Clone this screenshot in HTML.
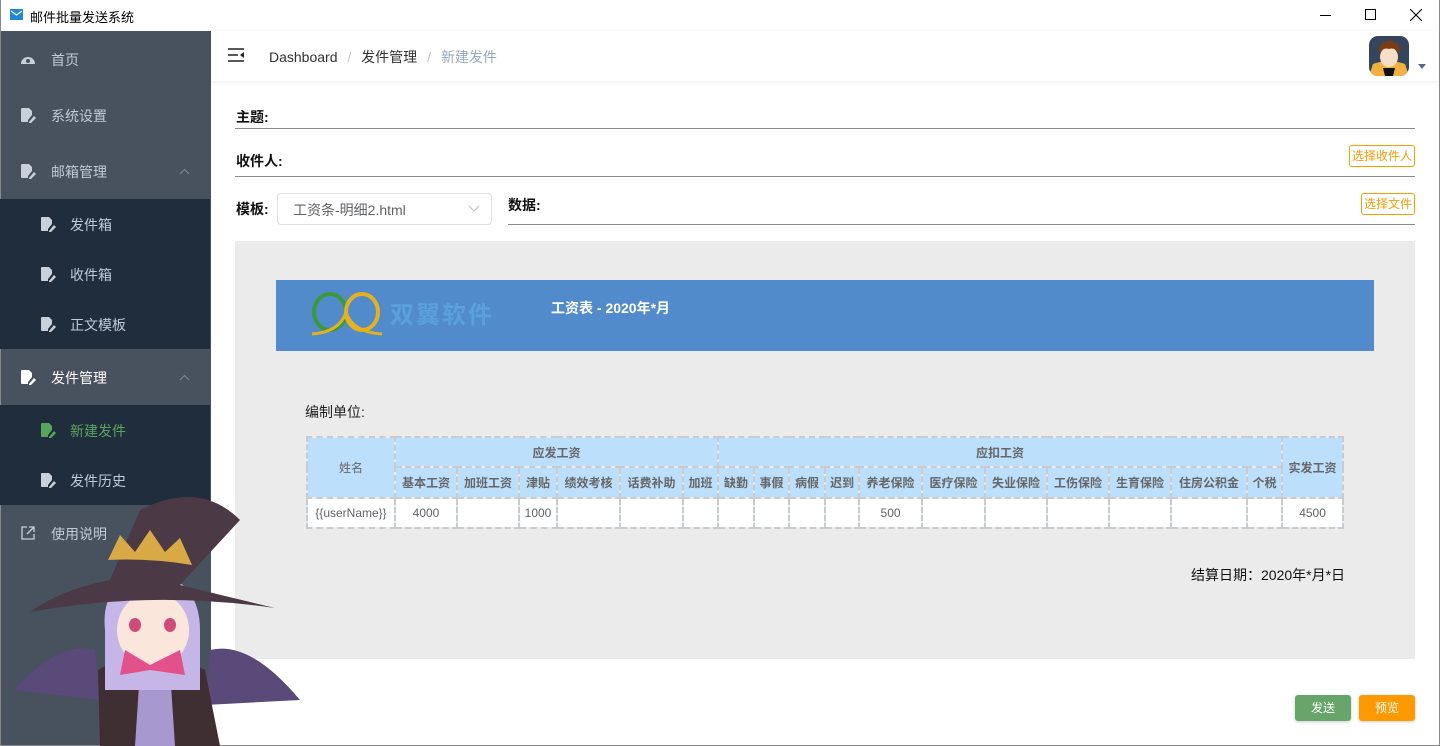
<!DOCTYPE html>
<html><head><meta charset="utf-8"><style>
*{margin:0;padding:0;box-sizing:border-box}
body{width:1440px;height:746px;overflow:hidden;position:relative;background:#fff;font-family:"Liberation Sans","Noto Sans CJK SC",sans-serif;font-size:14px;color:#303133}
.a{position:absolute}
.win{position:absolute;left:0;top:0;width:1440px;height:746px;border:1px solid #8a8a8a;border-top:none}
.side{left:1px;top:31px;width:210px;height:714px;background:#48515e}
.mi{position:absolute;left:0;width:210px;color:#bfcbd9;font-size:14px}
.sub{background:#1f2d3d}
.line{position:absolute;height:1px;background:#8c8c8c}
.lbl{position:absolute;font-weight:bold;font-size:14px;color:#111}
.obtn{position:absolute;border:1px solid #f90;color:#f90;font-size:12px;border-radius:3px;height:22px;line-height:20px;text-align:center;background:#fff}
table{border-collapse:collapse;table-layout:fixed;position:absolute;left:306px;top:436px;width:1036px}
td{border:2px dashed #c6ccd2;text-align:center;font-size:12px;color:#606266;padding:0;overflow:hidden;white-space:nowrap}
.h td{background:#bcdffb;font-weight:bold;color:#666}
</style></head><body>
<svg width="0" height="0" style="position:absolute"><defs><g id="doc"><path d="M0 1Q0 0 1 0H8L11 3V7L7 12V14H1Q0 14 0 13Z"/><path d="M8 14L13 8L15 10L10 15H8Z"/></g></defs></svg>
<div class="win"></div>
<div class="a" style="left:10px;top:9px;width:13px;height:11px;background:#1e88d6"></div>
<svg class="a" style="left:10px;top:9px" width="13" height="11"><path d="M1 2 L6.5 6 L12 2" stroke="#fff" stroke-width="1.3" fill="none"/></svg>
<div class="a" style="left:30px;top:7px;font-size:13px;color:#000">邮件批量发送系统</div>
<div class="a" style="left:1320px;top:15px;width:11px;height:1px;background:#000"></div>
<div class="a" style="left:1365px;top:9px;width:11px;height:11px;border:1px solid #000"></div>
<svg class="a" style="left:1410px;top:9px" width="12" height="12"><path d="M0 0L12 12M12 0L0 12" stroke="#000" stroke-width="1.1"/></svg>
<div class="a side"></div>
<div class="mi" style="top:31px;height:56px"><svg class="a" style="left:20px;top:21px" width="16" height="13"><path d="M1 12 A7 7 0 1 1 15 12Z" fill="#c8d0da"/><circle cx="8" cy="9" r="2" fill="#48515e"/></svg><span class="a" style="left:51px;top:19px">首页</span></div>
<div class="mi" style="top:87px;height:56px"><svg class="a" style="left:21px;top:21px" width="16" height="16" fill="#c8d0da"><use href="#doc"/></svg><span class="a" style="left:51px;top:19px">系统设置</span></div>
<div class="mi" style="top:143px;height:56px"><svg class="a" style="left:21px;top:21px" width="16" height="16" fill="#c8d0da"><use href="#doc"/></svg><span class="a" style="left:51px;top:19px">邮箱管理</span><svg class="a" style="left:179px;top:25px" width="11" height="7"><path d="M1 6L5.5 1.5L10 6" stroke="#7d8793" fill="none"/></svg></div>
<div class="mi sub" style="top:199px;height:150px"></div>
<div class="mi" style="top:199px;height:50px"><svg class="a" style="left:41px;top:18px" width="16" height="16" fill="#c8d0da"><use href="#doc"/></svg><span class="a" style="left:70px;top:16px">发件箱</span></div>
<div class="mi" style="top:249px;height:50px"><svg class="a" style="left:41px;top:18px" width="16" height="16" fill="#c8d0da"><use href="#doc"/></svg><span class="a" style="left:70px;top:16px">收件箱</span></div>
<div class="mi" style="top:299px;height:50px"><svg class="a" style="left:41px;top:18px" width="16" height="16" fill="#c8d0da"><use href="#doc"/></svg><span class="a" style="left:70px;top:16px">正文模板</span></div>
<div class="mi" style="top:349px;height:56px;color:#fff"><svg class="a" style="left:21px;top:21px" width="16" height="16" fill="#fff"><use href="#doc"/></svg><span class="a" style="left:51px;top:19px">发件管理</span><svg class="a" style="left:179px;top:25px" width="11" height="7"><path d="M1 6L5.5 1.5L10 6" stroke="#7d8793" fill="none"/></svg></div>
<div class="mi sub" style="top:405px;height:100px"></div>
<div class="mi" style="top:405px;height:50px;color:#58a65c"><svg class="a" style="left:41px;top:18px" width="16" height="16" fill="#58a65c"><use href="#doc"/></svg><span class="a" style="left:70px;top:16px">新建发件</span></div>
<div class="mi" style="top:455px;height:50px"><svg class="a" style="left:41px;top:18px" width="16" height="16" fill="#c8d0da"><use href="#doc"/></svg><span class="a" style="left:70px;top:16px">发件历史</span></div>
<div class="mi" style="top:505px;height:56px"><svg class="a" style="left:21px;top:21px" width="14" height="14"><path d="M6 1H1V13H13V8M8 1H13V6M13 1L6 8" stroke="#c8d0da" fill="none" stroke-width="1.3"/></svg><span class="a" style="left:51px;top:19px">使用说明</span></div>
<div class="a" style="left:211px;top:31px;width:1228px;height:50px;box-shadow:0 1px 4px rgba(0,21,41,.08)"></div>
<svg class="a" style="left:228px;top:48px" width="16" height="14"><path d="M0 1H16M0 7H10M0 13H16" stroke="#222" stroke-width="1.6"/><path d="M16 4L12 7L16 10Z" fill="#222"/></svg>
<div class="a" style="left:269px;top:47px;font-size:14px;color:#303133">Dashboard <span style="color:#c0c4cc;margin:0 6px">/</span> 发件管理 <span style="color:#c0c4cc;margin:0 6px">/</span> <span style="color:#97a8be">新建发件</span></div>
<svg class="a" style="left:1369px;top:36px" width="40" height="40"><defs><clipPath id="c"><rect width="40" height="40" rx="9"/></clipPath></defs><g clip-path="url(#c)"><rect width="40" height="40" fill="#34455e"/><path d="M0 40 L4 28 Q20 22 36 28 L40 40Z" fill="#f4b03c"/><path d="M14 32 L26 32 L24 40 L16 40Z" fill="#111"/><ellipse cx="20" cy="21" rx="9" ry="10" fill="#f6dfc6"/><path d="M9 18 Q10 4 22 5 Q32 6 31 18 Q26 11 20 13 Q14 11 9 18Z" fill="#7a3c12"/></g></svg>
<svg class="a" style="left:1418px;top:64px" width="8" height="5"><path d="M0 0H8L4 5Z" fill="#5a6b80"/></svg>
<div class="lbl" style="left:236px;top:107px">主题:</div>
<div class="line" style="left:235px;top:128px;width:1180px"></div>
<div class="lbl" style="left:236px;top:151px">收件人:</div>
<div class="obtn" style="left:1349px;top:145px;width:66px">选择收件人</div>
<div class="line" style="left:235px;top:176px;width:1180px"></div>
<div class="lbl" style="left:236px;top:199px">模板:</div>
<div class="a" style="left:277px;top:193px;width:215px;height:32px;border:1px solid #dcdfe6;border-radius:4px"></div>
<div class="a" style="left:293px;top:200px;color:#606266;font-size:14px">工资条-明细2.html</div>
<svg class="a" style="left:468px;top:205px" width="12" height="8"><path d="M1 1L6 6L11 1" stroke="#c0c4cc" fill="none" stroke-width="1.2"/></svg>
<div class="lbl" style="left:508px;top:195px">数据:</div>
<div class="obtn" style="left:1361px;top:193px;width:54px">选择文件</div>
<div class="line" style="left:508px;top:224px;width:907px"></div>
<div class="a" style="left:235px;top:241px;width:1180px;height:418px;background:#ebebeb"></div>
<div class="a" style="left:276px;top:280px;width:1098px;height:71px;background:#518bcb"></div>
<svg class="a" style="left:310px;top:292px" width="75" height="44"><ellipse cx="20" cy="20" rx="16" ry="18" fill="none" stroke="#3a9a3a" stroke-width="4"/><ellipse cx="52" cy="20" rx="16" ry="18" fill="none" stroke="#e6b21a" stroke-width="4"/><path d="M2 42 Q30 40 36 20 Q42 40 72 42" stroke="#e6b21a" stroke-width="3" fill="none"/></svg>
<div class="a" style="left:390px;top:295px;font-size:24px;font-weight:bold;color:#5aa0dc;letter-spacing:2px">双翼软件</div>
<div class="a" style="left:551px;top:298px;font-size:14px;font-weight:bold;color:#fff">工资表 - 2020年*月</div>
<div class="a" style="left:305px;top:402px;font-size:14px;color:#222">编制单位:</div>
<table>
<colgroup><col style="width:88px"><col style="width:62px"><col style="width:62px"><col style="width:38px"><col style="width:63px"><col style="width:63px"><col style="width:35px"><col style="width:36px"><col style="width:35px"><col style="width:36px"><col style="width:34px"><col style="width:63px"><col style="width:63px"><col style="width:62px"><col style="width:62px"><col style="width:62px"><col style="width:76px"><col style="width:35px"><col style="width:61px"></colgroup>
<tr class="h" style="height:30px"><td rowspan="2" style="font-weight:normal">姓名</td><td colspan="6">应发工资</td><td colspan="11">应扣工资</td><td rowspan="2">实发工资</td></tr>
<tr class="h" style="height:31px"><td>基本工资</td><td>加班工资</td><td>津贴</td><td>绩效考核</td><td>话费补助</td><td>加班</td><td>缺勤</td><td>事假</td><td>病假</td><td>迟到</td><td>养老保险</td><td>医疗保险</td><td>失业保险</td><td>工伤保险</td><td>生育保险</td><td>住房公积金</td><td>个税</td></tr>
<tr style="height:30px;background:#fff"><td>{{userName}}</td><td>4000</td><td></td><td>1000</td><td></td><td></td><td></td><td></td><td></td><td></td><td></td><td>500</td><td></td><td></td><td></td><td></td><td></td><td></td><td>4500</td></tr>
</table>
<div class="a" style="left:1191px;top:565px;font-size:14px;color:#111">结算日期：2020年*月*日</div>
<div class="a" style="left:1295px;top:695px;width:56px;height:26px;background:#67a56b;color:#fff;border-radius:3px;text-align:center;line-height:26px;font-size:12px;box-shadow:0 1px 3px rgba(0,0,0,.2)">发送</div>
<div class="a" style="left:1359px;top:695px;width:56px;height:26px;background:#f90;color:#fff;border-radius:3px;text-align:center;line-height:26px;font-size:12px;box-shadow:0 1px 3px rgba(0,0,0,.2)">预览</div>
<svg class="a" style="left:0;top:490px" width="310" height="256">
<path d="M14 200 Q60 150 95 160 L100 210Z" fill="#5a4a7a"/>
<path d="M300 210 Q250 150 210 160 L205 215Z" fill="#5a4a7a"/>
<path d="M100 256 L98 180 Q150 150 205 180 L220 256Z" fill="#3f2f33"/>
<path d="M135 256 L140 180 L170 180 L175 256Z" fill="#a898d0"/>
<path d="M105 140 Q100 90 150 80 Q200 90 200 140 L200 200 L105 200Z" fill="#c6b6e8"/>
<ellipse cx="153" cy="140" rx="36" ry="38" fill="#fbe6dc"/>
<ellipse cx="135" cy="135" rx="6" ry="7" fill="#d24a7a"/><ellipse cx="170" cy="135" rx="6" ry="7" fill="#d24a7a"/>
<path d="M125 160 L150 175 L180 160 L185 185 L150 180 L120 185Z" fill="#e4508a"/>
<path d="M30 122 Q150 100 275 118 Q200 100 180 95 L240 30 Q200 -10 140 20 L110 90 Q60 100 30 122Z" fill="#4b3a45"/>
<path d="M108 70 L120 45 L135 62 L150 40 L165 62 L180 48 L192 75 Q150 68 108 70Z" fill="#d8aa45"/>
</svg>
</body></html>
